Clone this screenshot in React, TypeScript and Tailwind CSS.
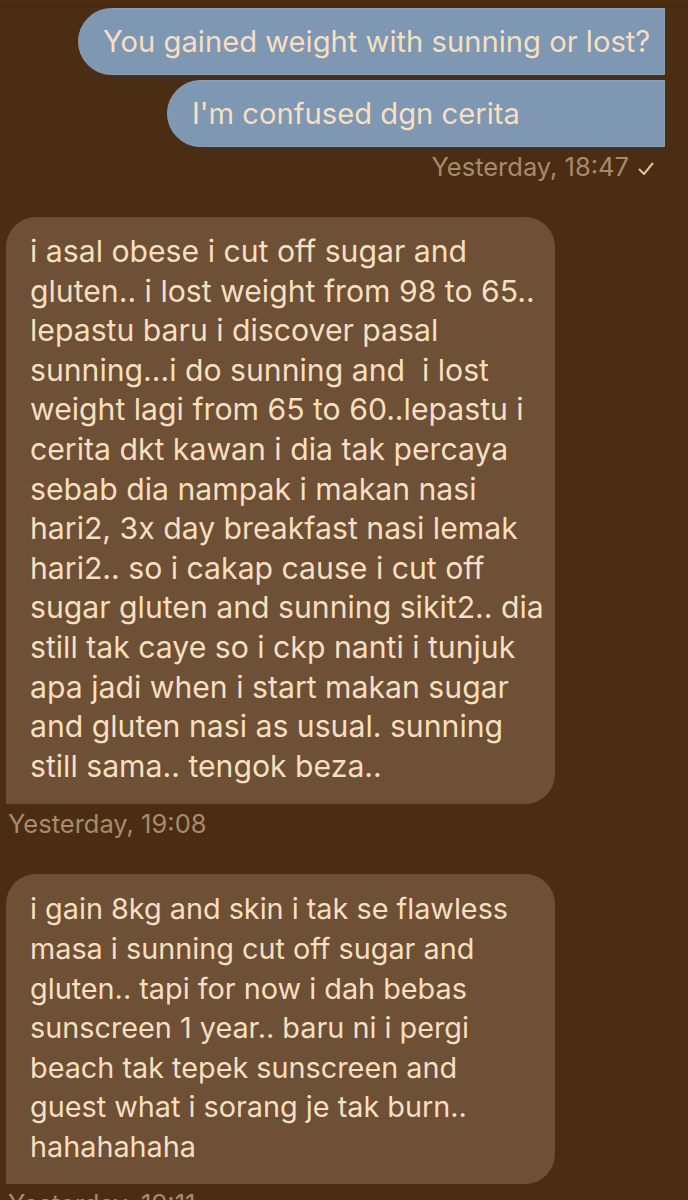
const sent = [
  { text: "You gained weight with sunning or lost?", width: "w-[587px]" },
  { text: "I'm confused dgn cerita", width: "w-[498px]" },
];

const received = [
  {
    lines: [
      "i asal obese i cut off sugar and",
      "gluten.. i lost weight from 98 to 65..",
      "lepastu baru i discover pasal",
      "sunning...i do sunning and  i lost",
      "weight lagi from 65 to 60..lepastu i",
      "cerita dkt kawan i dia tak percaya",
      "sebab dia nampak i makan nasi",
      "hari2, 3x day breakfast nasi lemak",
      "hari2.. so i cakap cause i cut off",
      "sugar gluten and sunning sikit2.. dia",
      "still tak caye so i ckp nanti i tunjuk",
      "apa jadi when i start makan sugar",
      "and gluten nasi as usual. sunning",
      "still sama.. tengok beza..",
    ],
    time: "Yesterday, 19:08",
    size: "text-[30.2px]",
  },
  {
    lines: [
      "i gain 8kg and skin i tak se flawless",
      "masa i sunning cut off sugar and",
      "gluten.. tapi for now i dah bebas",
      "sunscreen 1 year.. baru ni i pergi",
      "beach tak tepek sunscreen and",
      "guest what i sorang je tak burn..",
      "hahahahaha",
    ],
    time: "Yesterday, 19:11",
    size: "text-[28.8px]",
  },
];

const CheckIcon = () => (
  <svg width="18" height="18" viewBox="0 0 18 18" fill="none" className="ml-2 mt-1">
    <path d="M2.5 9.5 L7 14 L15.5 3.5" stroke="#d9c2a2" strokeWidth="2" strokeLinecap="round" strokeLinejoin="round" />
  </svg>
);

export default function App() {
  return (
    <div
      className="h-[1200px] w-[688px] overflow-hidden bg-[#4b2d13] text-[#f7dfc0]"
      style={{ fontFamily: "Inter, 'Noto Sans', sans-serif" }}
    >
      <div className="h-[7px] border-b border-[#3f250f]" />
      {/* outgoing */}
      <div className="flex flex-col items-end gap-[5px] pr-[23px] pt-px">
        {sent.map((m) => (
          <div
            key={m.text}
            className={`h-[67px] flex items-center rounded-l-[34px] border border-[#8aa0b8] bg-[#7e97b3] pl-6 pr-4 text-[29.2px] whitespace-nowrap ${m.width}`}
          >
            {m.text}
          </div>
        ))}
      </div>
      <div className="mt-[5px] flex items-center justify-end pr-[33px] text-[25.5px] leading-[30px] text-[#a88b6b]">
        <span>Yesterday, 18:47</span>
        <CheckIcon />
      </div>

      {/* incoming */}
      <div className="mt-[35px] flex flex-col pl-[6px]">
        {received.map((m, i) => (
          <div key={i} className={i === 0 ? "" : "mt-[35px]"}>
            <div
              className={`w-[549px] rounded-t-[30px] rounded-br-[30px] bg-[#6d5035] pb-[18px] pl-6 pr-4 pt-[15px] leading-[39.6px] ${m.size}`}
            >
              {m.lines.map((l, j) => (
                <div key={j} className="whitespace-pre">
                  {l}
                </div>
              ))}
            </div>
            <div className="mt-[5px] pl-[2px] text-[25.5px] leading-[30px] text-[#a88b6b]">{m.time}</div>
          </div>
        ))}
      </div>
    </div>
  );
}
